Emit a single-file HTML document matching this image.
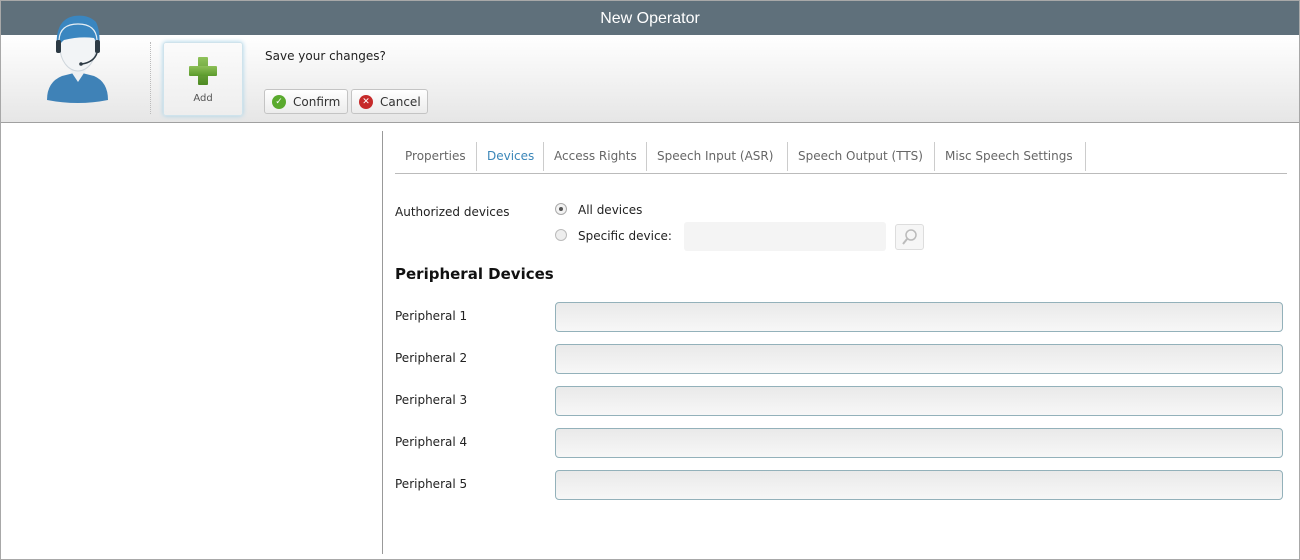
<!DOCTYPE html>
<html><head><meta charset="utf-8"><style>
*{box-sizing:border-box;margin:0;padding:0}
body{width:1300px;height:560px;background:#fff;font-family:"DejaVu Sans","Liberation Sans",sans-serif;font-size:12px;color:#222;position:relative;overflow:hidden}
.frame{position:absolute;left:0;top:0;width:1300px;height:560px;border:1px solid #a8a8a8}
.hdr{position:absolute;left:1px;top:1px;width:1298px;height:34px;background:#5f707b;color:#fff;font-family:"Liberation Sans",sans-serif;font-size:16px;text-align:center;line-height:35px}
.tb{position:absolute;left:1px;top:35px;width:1298px;height:88px;background:linear-gradient(#fff,#e6e6e6);border-bottom:1px solid #a0a0a0}
.abs{position:absolute}
.btn{position:absolute;height:25px;border:1px solid #c4c4c4;border-radius:3px;background:linear-gradient(#fff,#ececec);font-size:12px;color:#333;line-height:24px;padding-left:28px}
.ico{position:absolute;left:7px;top:5px;width:14px;height:14px;border-radius:50%;color:#fff;font-size:9px;line-height:14px;text-align:center;font-weight:bold}
.tabs{position:absolute;left:395px;top:142px;width:892px;height:32px;border-bottom:1px solid #bbb}
.tab{position:absolute;top:0;height:29px;line-height:28px;color:#666;font-size:12px;padding-left:10px;border-right:1px solid #ccc}
.lbl{position:absolute;left:395px;font-size:12px;color:#222}
.inp{position:absolute;left:555px;width:728px;height:30px;border:1px solid #93b1ba;border-radius:4px;background:linear-gradient(#e9e9e9,#f7f7f7)}
</style></head><body>
<div class="frame"></div>
<div class="hdr">New Operator</div>
<div class="tb"></div>
<svg class="abs" style="left:40px;top:12px" width="80" height="95" viewBox="40 12 80 95">
<path d="M47 100 Q47 82 62 76 L78 72 L94 76 Q108 82 108 100 Q78 106 47 100Z" fill="#3f82b7"/>
<path d="M70 70 L78 82 L86 70Z" fill="#eef0f2"/>
<ellipse cx="78" cy="47" rx="18" ry="24" fill="#f2f4f6" stroke="#cfd6dc" stroke-width="1"/>
<path d="M57 50 Q54 20 74 16 Q88 14 96 22 Q101 32 99 50 Q97 42 94 38 Q80 36 64 40 Q59 44 57 50Z" fill="#3a86c0"/>
<path d="M59 40 Q60 24 78 24 Q96 24 97 40" fill="none" stroke="#e6eef4" stroke-width="1.2"/>
<rect x="56" y="40" width="5" height="13" rx="2" fill="#2d3a44"/>
<rect x="95" y="40" width="5" height="13" rx="2" fill="#2d3a44"/>
<path d="M97 53 Q94 62 82 64" fill="none" stroke="#2d3a44" stroke-width="1.5"/>
<circle cx="81" cy="64" r="1.8" fill="#2d3a44"/>
</svg>
<div class="abs" style="left:150px;top:42px;height:72px;border-left:1px dotted #bbb"></div>
<div class="abs" style="left:163px;top:42px;width:80px;height:74px;border:1px solid #cfe3ec;border-radius:3px;background:linear-gradient(#fbfbfb,#eeeeee);box-shadow:0 0 5px #a9d3e8"></div>
<div class="abs" style="left:198px;top:57px;width:10px;height:28px;background:linear-gradient(#8fc25a,#4d8a22);border-radius:1px"></div>
<div class="abs" style="left:189px;top:66px;width:28px;height:10px;background:linear-gradient(#8ec058,#5b9a2c);border-radius:1px"></div>
<div class="abs" style="left:163px;top:93px;width:80px;text-align:center;font-size:10px;color:#555">Add</div>
<div class="abs" style="left:265px;top:49px;font-size:12px">Save your changes?</div>
<div class="btn" style="left:264px;top:89px;width:84px"><span class="ico" style="background:#5aaa2e">✓</span>Confirm</div>
<div class="btn" style="left:351px;top:89px;width:77px"><span class="ico" style="background:#c62a2a">✕</span>Cancel</div>
<div class="abs" style="left:382px;top:131px;height:423px;border-left:1px solid #999"></div>
<div class="tabs">
<div class="tab" style="left:0;width:82px">Properties</div>
<div class="tab" style="left:82px;width:67px;color:#3a86b8">Devices</div>
<div class="tab" style="left:149px;width:103px">Access Rights</div>
<div class="tab" style="left:252px;width:141px">Speech Input (ASR)</div>
<div class="tab" style="left:393px;width:147px">Speech Output (TTS)</div>
<div class="tab" style="left:540px;width:151px">Misc Speech Settings</div>
</div>
<div class="lbl" style="top:205px">Authorized devices</div>
<div class="abs" style="left:555px;top:203px;width:12px;height:12px;border:1px solid #aaa;border-radius:50%;background:#f3f3f3"><div style="margin:3px;width:4px;height:4px;border-radius:50%;background:#555"></div></div>
<div class="abs" style="left:578px;top:203px">All devices</div>
<div class="abs" style="left:555px;top:229px;width:12px;height:12px;border:1px solid #bbb;border-radius:50%;background:#eee"></div>
<div class="abs" style="left:578px;top:229px">Specific device:</div>
<div class="abs" style="left:684px;top:222px;width:202px;height:29px;background:#f4f4f4;border-radius:3px"></div>
<div class="abs" style="left:895px;top:224px;width:29px;height:26px;border:1px solid #ddd;border-radius:3px;background:#f6f6f6"><svg width="27" height="24"><circle cx="15" cy="10" r="5" fill="none" stroke="#bbb" stroke-width="1.5"/><path d="M11 14 L7 19" stroke="#bbb" stroke-width="2"/></svg></div>
<div class="abs" style="left:395px;top:265px;font-size:15px;font-weight:bold;color:#111">Peripheral Devices</div>
<div class="lbl" style="top:309px">Peripheral 1</div><div class="inp" style="top:302px"></div>
<div class="lbl" style="top:351px">Peripheral 2</div><div class="inp" style="top:344px"></div>
<div class="lbl" style="top:393px">Peripheral 3</div><div class="inp" style="top:386px"></div>
<div class="lbl" style="top:435px">Peripheral 4</div><div class="inp" style="top:428px"></div>
<div class="lbl" style="top:477px">Peripheral 5</div><div class="inp" style="top:470px"></div>
</body></html>
